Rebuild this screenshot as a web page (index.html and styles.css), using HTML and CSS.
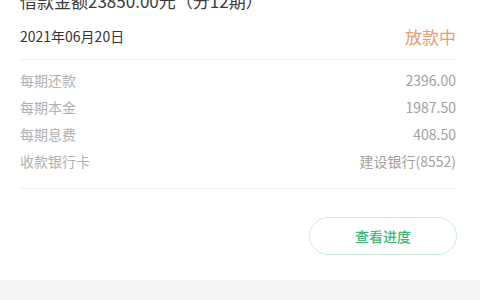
FILE: index.html
```html
<!DOCTYPE html>
<html lang="zh-CN">
<head>
<meta charset="utf-8">
<link rel="stylesheet" href="styles.css">
</head>
<body>
<div class="card">
  <div class="head">
    <div class="title">借款金额23850.00元（分12期）</div>
    <div class="date-row">
      <span class="date">2021年06月20日</span>
      <span class="status">放款中</span>
    </div>
  </div>
  <div class="details">
    <div class="row"><span class="label">每期还款</span><span class="value">2396.00</span></div>
    <div class="row"><span class="label">每期本金</span><span class="value">1987.50</span></div>
    <div class="row"><span class="label">每期息费</span><span class="value">408.50</span></div>
    <div class="row"><span class="label">收款银行卡</span><span class="value">建设银行(8552)</span></div>
  </div>
  <div class="actions">
    <button class="btn">查看进度</button>
  </div>
</div>
<div class="gap"></div>
</body>
</html>
```

FILE: styles.css
```css
html, body {
  margin: 0;
  padding: 0;
  background: #ffffff;
  height: 300px;
  overflow: hidden;
}
body {
  font-family: "Noto Sans CJK SC", "Noto Sans", sans-serif;
  display: flex;
  flex-direction: column;
}
.card {
  padding: 0 24px 0 20px;
  height: 280px;
  box-sizing: border-box;
}
.head {
  margin-top: -9px;
  padding-bottom: 11px;
  border-bottom: 1px solid #eeeeee;
}
.title {
  font-size: 17px;
  line-height: 20px;
  color: #3a3a3a;
  white-space: nowrap;
}
.date-row {
  margin-top: 13px;
  height: 24px;
  display: flex;
  justify-content: space-between;
  align-items: center;
}
.date {
  font-size: 14px;
  color: #333333;
}
.status {
  font-size: 17px;
  color: #ee9a6a;
}
.details {
  padding: 6px 0 14px;
  border-bottom: 1px solid #eeeeee;
}
.row {
  height: 27px;
  display: flex;
  justify-content: space-between;
  align-items: center;
  font-size: 14px;
}
.label {
  color: #b0b0b0;
}
.value {
  color: #a0a0a0;
}
.actions {
  display: flex;
  justify-content: flex-end;
  padding-top: 28px;
  margin-right: -1px;
}
.btn {
  width: 148px;
  height: 38px;
  border: 1px solid #cdeedd;
  border-radius: 19px;
  background: #ffffff;
  color: #3dba78;
  font-family: "Noto Sans CJK SC", sans-serif;
  font-size: 14px;
  font-weight: 500;
  padding: 0;
}
.gap {
  flex: 1;
  background: #f4f5f5;
}
```
